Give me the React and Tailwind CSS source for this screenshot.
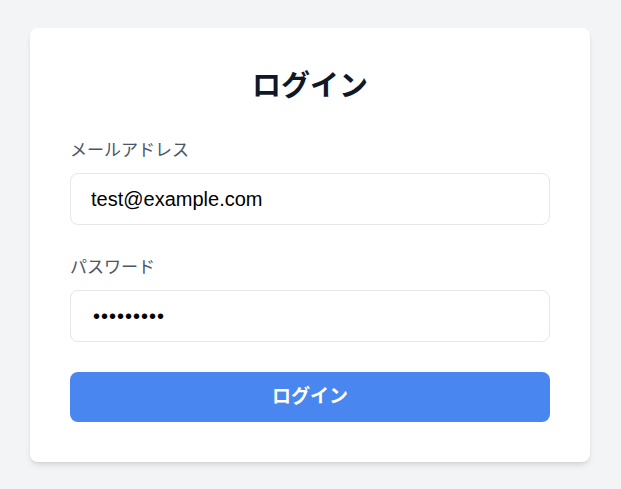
import { useState } from "react"

// Simple login card
export default function App() {
  const [email, setEmail] = useState("test@example.com")
  const [password, setPassword] = useState("password1")

  return (
    <div
      className="min-h-screen bg-[#f3f4f6] pt-[28px] px-[30px]"
      style={{ fontFamily: '"Liberation Sans", "Noto Sans CJK JP", sans-serif' }}
    >
      <div className="w-[560px] bg-white rounded-lg shadow-md p-10">
        <h1 className="text-center text-[29px] leading-[36px] font-bold text-gray-900">ログイン</h1>

        <form className="mt-[35px] flex flex-col" onSubmit={(e) => e.preventDefault()}>
          <label className="block text-[17px] leading-6 text-gray-600 mb-[10px]">メールアドレス</label>
          <input
            type="email"
            value={email}
            onChange={(e) => setEmail(e.target.value)}
            className="w-full h-[52px] px-5 text-[20px] text-black border border-gray-200 rounded-lg outline-none"
          />

          <label className="block text-[17px] leading-6 text-gray-600 mb-[10px] mt-[31px]">パスワード</label>
          <input
            type="password"
            value={password}
            onChange={(e) => setPassword(e.target.value)}
            className="w-full h-[52px] pl-[22px] pr-5 text-[20px] tracking-[1px] text-black border border-gray-200 rounded-lg outline-none"
          />

          <button
            type="submit"
            className="mt-[30px] w-full h-[50px] rounded-lg bg-[#4a86ef] text-white text-[19px] font-bold"
          >
            ログイン
          </button>
        </form>
      </div>
    </div>
  )
}
